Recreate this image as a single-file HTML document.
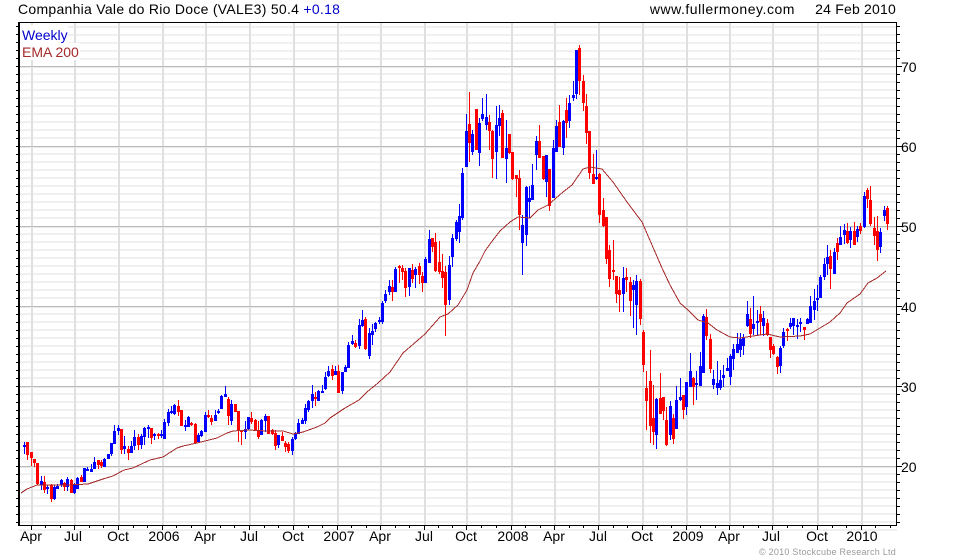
<!DOCTYPE html>
<html><head><meta charset="utf-8"><style>
html,body{margin:0;padding:0;background:#fff}
svg{display:block}
text{font-family:"Liberation Sans",Arial,sans-serif;font-size:14px;fill:#000}
</style></head><body>
<svg id="c" xmlns="http://www.w3.org/2000/svg" width="980" height="560" viewBox="0 0 980 560">
<rect width="980" height="560" fill="#fff"/>
<g id="grid" shape-rendering="crispEdges"></g>
<rect x="20" y="25" width="48" height="18" fill="#fff"/>
<rect x="20" y="43" width="60" height="17" fill="#fff"/>
<g id="candles" shape-rendering="crispEdges"></g>
<polyline fill="none" stroke="#a52a2a" stroke-width="1" shape-rendering="crispEdges" points="21,493 27,489 37,485 68,485 88,484 103,479 113,476 124,470 133,468 150,460 163,457 177,448 183,446 197,443 217,438 227,433 233,431 248,430 267,431 283,431 293,434 303,432 317,427 325,423 330,418 345,408 359,400 367,392 378,383 390,372 403,353 425,334 440,317 448,314 458,305 467,290 473,273 480,261 485,251 493,240 500,231 510,222 518,217 530,218 538,210 548,205 563,192 572,185 583,169 590,167 602,169 613,182 627,202 642,222 652,245 662,268 670,285 680,303 688,310 698,320 708,323 717,330 730,337 740,338 753,336 767,334 780,337 800,336 810,334 820,328 830,322 840,313 847,303 860,294 868,283 877,278 886,271"/>
<g id="axes" shape-rendering="crispEdges"></g>
<text x="18" y="14" style="letter-spacing:.28px">Companhia Vale do Rio Doce (VALE3) 50.4 <tspan style="fill:#0000cc">+0.18</tspan></text>
<text x="795" y="14" text-anchor="end" style="letter-spacing:.53px">www.fullermoney.com</text>
<text x="896" y="14" text-anchor="end" style="letter-spacing:.2px">24 Feb 2010</text>
<text x="22" y="40" style="fill:#0000cc">Weekly</text>
<text x="22" y="57" style="fill:#a52a2a">EMA 200</text>
<text x="901" y="72">70</text><text x="901" y="152">60</text><text x="901" y="232">50</text><text x="901" y="312">40</text><text x="901" y="392">30</text><text x="901" y="472">20</text>
<g text-anchor="middle">
<text x="31" y="541">Apr</text><text x="73" y="541">Jul</text><text x="118" y="541">Oct</text><text x="164" y="541">2006</text><text x="205" y="541">Apr</text><text x="249" y="541">Jul</text><text x="293" y="541">Oct</text><text x="339" y="541">2007</text><text x="380" y="541">Apr</text><text x="424" y="541">Jul</text><text x="466" y="541">Oct</text><text x="513" y="541">2008</text><text x="554" y="541">Apr</text><text x="598" y="541">Jul</text><text x="642" y="541">Oct</text><text x="688" y="541">2009</text><text x="729" y="541">Apr</text><text x="771" y="541">Jul</text><text x="817" y="541">Oct</text><text x="862" y="541">2010</text>
</g>
<text x="896" y="555" text-anchor="end" style="font-size:9px;fill:#999;letter-spacing:.25px">© 2010 Stockcube Research Ltd</text>
</svg>
<script>
var NS="http://www.w3.org/2000/svg";
function R(g,x,y,w,h,f){var r=document.createElementNS(NS,"rect");r.setAttribute("x",x);r.setAttribute("y",y);r.setAttribute("width",w);r.setAttribute("height",h);r.setAttribute("fill",f);g.appendChild(r);}
var G=document.getElementById("grid"),A=document.getElementById("axes"),C=document.getElementById("candles");
var Q=[31,74,118,162,205,249,293,337,380,424,466,511,554,598,642,686,729,772,817,861];
var i,k;
for(k=0;k<64;k++){var y=26+k*8;if((y-66)%80!==0)R(G,19,y-(y>66?1:0),878,2,"#f0f0f0");}
for(i=0;i<Q.length;i++)R(G,Q[i],23,2,502,"#e0e0e0");
for(k=0;k<6;k++){R(G,19,66+k*80,878,1,"#bbbbbb");R(G,19,67+k*80,878,1,"#e8e8e8");}
R(A,18,22,879,1,"#000");R(A,18,22,2,504,"#000");R(A,896,22,1,504,"#000");R(A,18,525,879,1,"#000");
for(k=0;k<63;k++){var t=26+k*8;var maj=(t-66)%80===0;R(A,16,t,2,1,"#000");R(A,897,t,maj?5:3,1,"#000");}
R(A,31,526,1,4,"#000");
for(i=0;i<Q.length;i++){R(A,Q[i],526,1,4,"#000");if(i<Q.length-1){var d=(Q[i+1]-Q[i])/3;R(A,Math.round(Q[i]+d),526,1,2,"#000");R(A,Math.round(Q[i]+2*d),526,1,2,"#000");}}
R(A,875,526,1,2,"#000");R(A,890,526,1,2,"#000");
var D="b 442 445 447 454,r 442 442 455 460,r 452 452 458 466,r 459 459 463 467,r 463 463 484 485,b 476 481 485 490,r 476 482 490 493,b 485 487 489 494,r 484 485 499 502,b 485 487 499 500,b 484 486 489 489,b 479 480 485 487,r 482 483 487 491,b 477 479 487 491,r 479 480 493 493,b 483 485 493 494,b 477 478 489 489,r 475 477 482 482,b 468 468 482 482,b 467 469 470 471,b 464 469 472 472,b 457 462 469 469,r 460 460 465 469,r 460 462 466 468,b 458 459 467 467,b 454 454 459 459,b 443 443 454 456,b 425 431 444 444,b 425 428 431 435,r 429 429 450 454,b 436 446 449 454,r 446 449 453 460,b 441 446 453 453,b 430 437 446 450,r 434 437 445 450,b 434 436 445 449,b 427 428 437 445,b 425 427 429 438,r 428 428 438 444,b 433 434 436 440,r 433 434 436 439,b 430 434 436 438,b 419 422 439 439,b 409 412 423 426,b 406 411 413 414,b 404 405 414 415,r 400 406 412 416,r 410 410 426 426,b 420 425 427 431,b 416 417 427 427,r 422 423 425 426,r 423 424 443 444,b 433 435 442 443,b 430 431 436 437,b 412 415 432 432,r 410 415 417 418,r 415 418 422 425,b 410 415 421 421,b 409 411 413 414,b 395 396 409 409,b 386 394 397 397,r 397 399 416 425,b 400 404 421 425,r 404 404 412 412,r 411 411 431 442,r 430 430 432 445,b 421 429 432 439,b 417 417 429 430,r 412 418 422 424,r 419 420 430 430,r 421 430 437 439,b 419 420 435 435,b 414 416 421 432,r 416 416 434 434,r 429 430 434 435,r 430 433 446 450,b 435 435 445 448,r 432 436 441 441,r 441 443 447 452,r 442 444 451 453,b 437 439 451 455,b 432 433 439 440,b 419 423 434 434,b 418 420 424 424,b 404 408 421 424,b 400 401 410 412,b 385 394 401 408,r 392 397 399 406,b 390 391 401 401,b 385 391 393 393,b 372 377 389 390,b 366 371 376 377,r 365 369 376 380,b 366 371 375 375,r 365 371 393 393,b 372 372 391 394,b 365 367 372 372,b 342 345 368 368,b 335 341 344 345,r 340 343 347 348,b 319 325 346 349,b 310 320 326 327,r 317 319 349 350,b 328 333 356 359,b 324 331 335 345,b 322 323 329 332,b 317 320 322 324,b 301 303 322 324,b 290 294 301 303,b 280 286 292 295,r 280 287 292 301,b 267 269 292 292,r 265 266 268 283,r 265 268 272 280,r 268 271 288 297,b 268 268 287 296,r 264 270 279 283,b 267 269 275 288,r 263 266 275 284,r 272 276 283 292,b 257 259 283 283,b 230 239 263 263,r 238 238 247 252,r 233 242 271 272,r 241 262 272 274,r 254 271 278 288,r 266 272 305 336,b 256 265 300 305,b 234 238 257 267,b 220 222 239 241,b 204 216 232 243,b 168 173 218 220,b 114 131 167 167,r 92 124 143 162,b 130 134 152 155,r 109 109 150 150,b 118 123 153 166,b 98 114 119 121,b 94 117 125 130,r 115 122 131 150,r 130 131 159 178,b 106 125 152 179,b 105 118 126 136,r 110 113 158 158,b 120 148 159 183,r 134 134 153 154,r 152 152 179 180,r 175 175 179 197,r 170 178 215 230,b 215 225 243 275,b 186 187 235 246,b 186 198 202 218,b 164 185 200 200,b 136 141 155 170,r 125 141 158 158,r 156 156 179 180,b 155 155 182 197,r 169 169 206 211,b 140 148 198 198,b 120 126 152 152,r 105 122 147 147,b 120 121 148 155,r 98 110 123 138,b 95 103 121 128,b 81 95 98 101,b 50 50 94 99,r 45 48 81 95,r 75 81 103 111,r 94 106 133 144,r 131 131 173 179,r 154 174 184 184,b 150 177 179 180,r 173 174 215 223,r 198 210 226 227,r 217 217 259 264,r 245 250 279 287,r 240 270 272 280,r 276 276 294 303,r 277 290 295 312,b 267 278 294 312,r 268 277 280 292,r 277 282 301 316,b 280 285 290 328,b 275 281 305 335,r 279 281 319 325,r 330 332 365 372,r 371 388 401 430,r 350 381 426 443,r 385 418 432 445,b 398 399 435 449,r 373 398 414 414,r 397 397 411 420,r 407 420 445 446,b 401 406 435 440,r 414 418 439 444,b 386 400 429 429,b 378 397 400 401,r 395 395 410 419,b 382 382 407 415,b 353 371 387 387,r 377 378 387 405,b 371 383 385 400,b 352 366 386 386,b 314 316 373 373,r 309 317 336 340,r 334 339 369 373,b 370 379 385 389,b 361 383 388 395,b 370 380 388 390,b 365 375 378 387,b 358 368 371 371,b 354 356 377 385,b 344 349 359 370,b 333 344 353 353,b 333 339 350 357,b 334 338 346 355,b 301 314 326 327,r 308 319 334 338,b 296 324 329 335,b 310 321 323 336,r 306 314 322 335,b 311 318 326 336,r 319 323 335 336,r 337 337 350 358,r 344 346 354 355,r 356 357 367 374,b 346 348 366 373,b 328 332 346 348,r 328 329 331 341,b 318 323 327 329,b 318 318 326 335,b 319 325 327 339,b 318 322 324 332,r 327 327 330 340,b 318 319 324 324,b 296 306 323 323,b 289 301 310 320,b 285 298 300 311,b 275 277 298 298,b 258 264 277 280,b 245 257 264 275,r 250 256 269 289,b 248 252 274 274,r 238 243 252 260,b 226 237 245 245,b 224 230 235 244,r 223 231 243 244,b 227 231 240 248,r 222 231 245 245,b 226 229 237 242,r 223 226 231 234,b 192 196 227 228,r 188 190 199 208,r 186 200 224 226,r 217 228 236 245,r 216 231 250 261,b 228 232 247 253,b 206 210 216 221,r 206 208 224 230".split(",");
for(i=0;i<D.length;i++){var p=D[i].split(" "),f=p[0]=="b"?"#0000ff":"#ff0000",x=Math.floor(24.4+3.346*i),a=+p[1],b=+p[2],c=+p[3],e=+p[4];
R(C,x,a,1,Math.max(1,e-a),f);R(C,x-1,b,3,Math.max(2,c-b),f);}
</script>
</body></html>
